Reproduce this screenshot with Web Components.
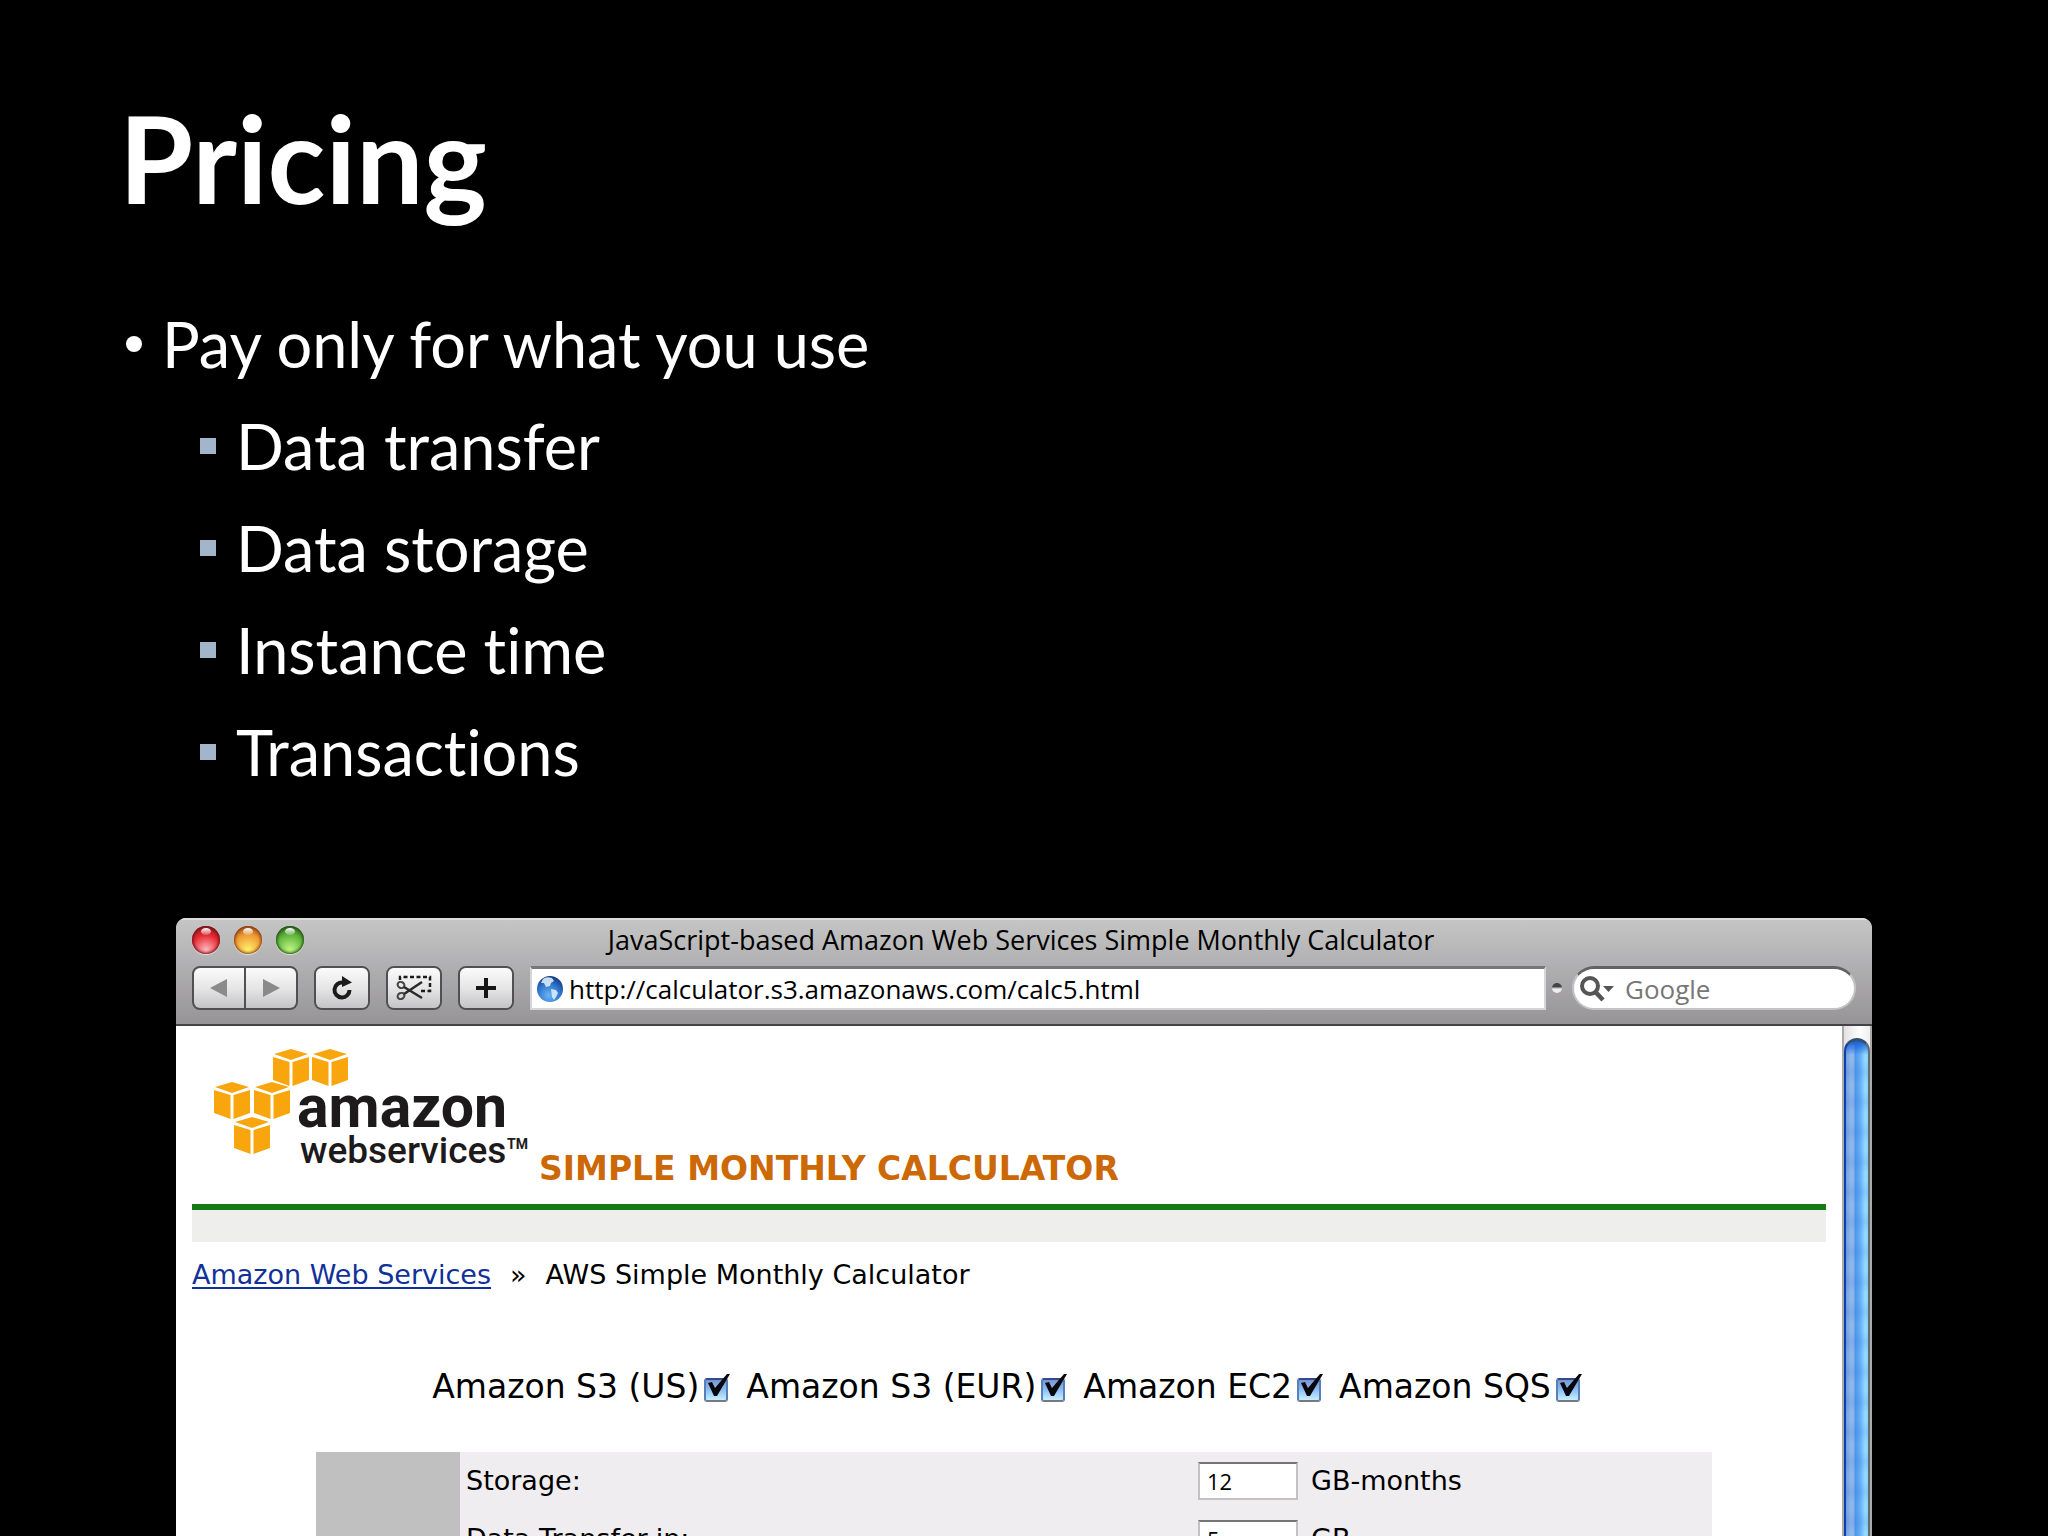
<!DOCTYPE html>
<html lang="en">
<head>
<meta charset="utf-8">
<title>Pricing</title>
<style>
body { margin: 0; background: #000; }
</style>
</head>
<body>
<pricing-slide>
  <slide-title slot="title">Pricing</slide-title>
  <slide-point>Pay only for what you use</slide-point>
  <slide-point level="2">Data transfer</slide-point>
  <slide-point level="2">Data storage</slide-point>
  <slide-point level="2">Instance time</slide-point>
  <slide-point level="2">Transactions</slide-point>
  <browser-window slot="figure" address="http://calculator.s3.amazonaws.com/calc5.html">
    <span slot="title">JavaScript-based Amazon Web Services Simple Monthly Calculator</span>
    <calculator-header>SIMPLE MONTHLY CALCULATOR</calculator-header>
    <page-crumbs>
      <span slot="home">Amazon Web Services</span>
      AWS Simple Monthly Calculator
    </page-crumbs>
    <service-list>
      <service-check>Amazon S3 (US)</service-check>
      <service-check>Amazon S3 (EUR)</service-check>
      <service-check>Amazon EC2</service-check>
      <service-check>Amazon SQS</service-check>
    </service-list>
    <usage-table></usage-table>
  </browser-window>
</pricing-slide>

<script>
const define = (name, html, setup) => {
  const template = document.createElement('template');
  template.innerHTML = html;
  customElements.define(name, class extends HTMLElement {
    constructor() {
      super();
      this.attachShadow({ mode: 'open' }).append(template.content.cloneNode(true));
    }
    connectedCallback() {
      if (setup) setup(this, this.shadowRoot);
    }
  });
};

define('pricing-slide', `
<style>
  :host { display: flex; flex-direction: column; box-sizing: border-box; height: 100vh; overflow: hidden;
    padding-top: 86px; background: #000; color: #fff; font-family: Lato, "Open Sans", sans-serif; font-variant-ligatures: none; }
  .points { padding: 63px 117px 115px; }
  .figure { display: flex; flex: 1; flex-direction: column; padding: 0 176px; }
</style>
<slot name="title"></slot>
<div class="points" role="list"><slot></slot></div>
<div class="figure"><slot name="figure"></slot></div>`);

define('slide-title', `
<style>
  :host { display: block; padding: 0 119px; }
  h1 { margin: 0; font-size: 120px; line-height: 144px; font-weight: bold; }
</style>
<h1><slot></slot></h1>`);

define('slide-point', `
<style>
  :host { display: flex; align-items: center; gap: 20px; padding-left: 9px; font-size: 63px; line-height: 102px; }
  :host::before { content: ""; width: 16px; height: 16px; border-radius: 50%; background: #fff; }
  :host([level="2"]) { padding-left: 83px; }
  :host([level="2"])::before { border-radius: 0; background: #a3b5cb; }
</style>
<slot></slot>`, host => host.setAttribute('role', 'listitem'));

define('browser-window', `
<style>
  :host { display: flex; flex: 1; flex-direction: column; overflow: hidden; border-radius: 10px 10px 0 0;
    background: #fff; color: #000; font-family: "Open Sans", "Noto Sans", sans-serif; }
  header { border-top: 2px solid #dcdcdc; border-bottom: 2px solid #444246; background: linear-gradient(#c5c5c6, #969496); }
  .bar { display: grid; grid-template-columns: 1fr auto 1fr; align-items: center; padding: 0 22px 0 16px;
    margin-top: -2px; font-size: 27px; line-height: 44px; }
  .tools { display: flex; align-items: center; gap: 16px; padding: 4px 16px 14px; }
  .address { display: flex; flex: 1; align-items: center; gap: 5px; box-sizing: border-box; height: 44px; padding-left: 4px;
    border: 2px solid #d6d6d8; border-top: 3px solid #78787a; background: #fff; }
  input { flex: 1; min-width: 0; margin: 0; padding: 0; border: 0; outline: 0; background: none;
    font: 26px/36px "Open Sans", "Noto Sans", sans-serif; color: #000; }
  input::placeholder { color: #777; opacity: 1; }
  .end { display: flex; align-items: center; gap: 10px; margin-left: -10px; }
  .grip { width: 10px; height: 10px; border-radius: 50%; background: linear-gradient(#444 35%, #eee 60%); }
  .search { display: flex; align-items: center; gap: 10px; box-sizing: border-box; width: 284px; height: 44px; padding: 0 20px 0 5px;
    border: 2px solid #c4c4c6; border-top: 3px solid #626264; border-radius: 22px; background: #fff; }
  svg { display: block; flex: none; }
  .view { display: flex; flex: 1; min-height: 0; }
  main { flex: 1; min-width: 0; padding: 0 16px; font-family: Verdana, "DejaVu Sans", sans-serif; }
</style>
<header>
  <div class="bar"><window-lights></window-lights><slot name="title"></slot></div>
  <div class="tools">
    <tool-group>
      <tool-button label="Back" wide><svg width="20" height="20"><path d="M1 10 18 1V19Z" fill="#8a8a8a"/></svg></tool-button>
      <tool-button label="Forward" wide><svg width="20" height="20"><path d="M19 10 2 1V19Z" fill="#8a8a8a"/></svg></tool-button>
    </tool-group>
    <tool-group><tool-button label="Reload"><svg width="26" height="28" viewBox="0 0 26 28"><path d="M14 8.500A7.500 7.500 0 1 0 20.500 16" fill="none" stroke="#1b1b1b" stroke-width="4"/><path d="M13 2 23 8.500 13 13Z" fill="#1b1b1b"/></svg></tool-button></tool-group>
    <tool-group><tool-button label="Web Clip"><svg width="38" height="30" viewBox="0 0 38 30"><path d="M5 7V4H35V18H24" fill="none" stroke="#1b1b1b" stroke-width="2.500" stroke-dasharray="4 2.500"/><g fill="none" stroke="#444" stroke-width="2"><ellipse cx="6" cy="12" rx="3.500" ry="3" transform="rotate(25 6 12)"/><ellipse cx="6" cy="23" rx="3.500" ry="3" transform="rotate(-25 6 23)"/><path d="M9 14 27 25M9 21 27 9" stroke="#2b2b2b" stroke-width="2.500"/></g></svg></tool-button></tool-group>
    <tool-group><tool-button label="Add Bookmark"><svg width="20" height="20"><path d="M10 0V20M0 10H20" stroke="#151515" stroke-width="4"/></svg></tool-button></tool-group>
    <div class="address">
      <svg width="28" height="28" viewBox="0 0 28 28"><defs><radialGradient id="g" cx=".45" cy=".75" r=".75"><stop offset="0" stop-color="#6cb4f4"/><stop offset=".6" stop-color="#2d74cc"/><stop offset="1" stop-color="#15387c"/></radialGradient></defs><circle cx="14" cy="14" r="13" fill="url(#g)"/><path d="M7 4Q10 1 16 3L18 6 15 8 14 11 10 12 8 8 5 8ZM15 14 20 15 22 18 20 22 18 25 16 22Z" fill="#d8ecfb" opacity=".9"/></svg>
      <input class="url" type="text" aria-label="Address">
    </div>
    <div class="end">
      <span class="grip"></span>
      <div class="search">
        <svg width="36" height="28" viewBox="0 0 36 28"><circle cx="11" cy="11" r="8" fill="none" stroke="#555" stroke-width="4"/><path d="M16.500 17 24 25" stroke="#555" stroke-width="4.500"/><path d="M24 11H35L29.500 17Z" fill="#555"/></svg>
        <input type="search" aria-label="Google search" placeholder="Google">
      </div>
    </div>
  </div>
</header>
<div class="view"><main><slot></slot></main><aqua-scrollbar></aqua-scrollbar></div>`,
(host, root) => { root.querySelector('.url').value = host.getAttribute('address'); });

define('window-lights', `
<style>
  :host { display: flex; gap: 14px; }
  button { position: relative; width: 28px; height: 28px; padding: 0; border: 0; border-radius: 50%;
    background: radial-gradient(circle at 50% 85%, var(--glow), var(--base) 55%, var(--rim) 100%);
    box-shadow: inset 0 0 3px 1px var(--rim), 0 1px 1px #e0e0e0; }
  button::before { content: ""; position: absolute; left: 9px; top: 2px; width: 10px; height: 7px; border-radius: 50%;
    background: linear-gradient(#fff, #fff3); }
  .close { --glow: #ffb8c0; --base: #e5282f; --rim: #701018; }
  .min { --glow: #fff26a; --base: #ee9a35; --rim: #84380e; }
  .zoom { --glow: #c3f584; --base: #5fb53c; --rim: #1d4d12; }
</style>
<button class="close" aria-label="Close"></button><button class="min" aria-label="Minimize"></button><button class="zoom" aria-label="Zoom"></button>`);

define('tool-group', `
<style>
  :host { display: flex; box-sizing: border-box; height: 44px; overflow: hidden; border: 2px solid #505052; border-radius: 8px;
    background: #505052; gap: 2px; }
</style>
<slot></slot>`);

define('tool-button', `
<style>
  :host { display: flex; width: 52px; }
  :host([wide]) { width: 50px; }
  button { display: flex; flex: 1; align-items: center; justify-content: center; padding: 0; border: 0;
    background: linear-gradient(#fbfbfb, #e6e6e7 50%, #c4c3c5); }
</style>
<button><slot></slot></button>`,
(host, root) => root.querySelector('button').setAttribute('aria-label', host.getAttribute('label')));

define('aqua-scrollbar', `
<style>
  :host { display: flex; box-sizing: border-box; width: 30px; padding-top: 12px; border-left: 2px solid #aaa; border-right: 2px solid #aaa;
    background: linear-gradient(90deg, #e4e0e2, #fff 60%, #f0eef0); }
  .thumb { flex: 1; box-sizing: border-box; border: solid; border-width: 3px 2px 0; border-color: #35516f #5d6d74 #5d6d74 #0c3fa8; border-radius: 13px 13px 0 0;
    background:
      linear-gradient(#1560d4, #2b7ae000 14px),
      repeating-linear-gradient(#2468d022 0 2px, #2468d000 12px 20px, #2468d022 30px),
      linear-gradient(90deg, #6f9fe4, #93b9e8 5px, #8ab4ea 8px, #4f95e9 9px, #64aef8 14px, #97d9ff 19px, #8ed2fd); }
</style>
<div class="thumb"></div>`);

define('aws-logo', `
<style>
  :host { display: block; }
  svg { display: block; }
</style>
<svg width="329" height="144" viewBox="210 1045 329 144" role="img">
  <defs>
    <g id="cube" fill="#f9a60e"><path d="M1 5 18 0 35 5 18 11Z"/><path d="M0 8 16.500 13V37L0 31Z"/><path d="M19.500 13 36 8V31L19.500 37Z"/></g>
  </defs>
  <use href="#cube" x="273" y="1049"/><use href="#cube" x="312" y="1049"/>
  <use href="#cube" x="214" y="1082"/><use href="#cube" x="254" y="1082"/>
  <use href="#cube" x="234" y="1117"/>
  <g fill="#1d1a1c" font-family="Roboto, sans-serif">
    <text x="297" y="1127" font-size="59" font-weight="bold">amazon</text>
    <text x="300" y="1163" font-size="37" font-weight="500">webservices</text>
    <text x="507" y="1149" font-size="14" font-weight="bold">TM</text>
  </g>
</svg>`);

define('calculator-header', `
<style>
  :host { display: flex; align-items: flex-end; padding: 19px 0 15px 18px; border-bottom: 6px solid #137a16; }
  h2 { margin: 0; color: #cc6805; font-size: 33px; line-height: 40px; font-weight: bold; }
</style>
<aws-logo></aws-logo><h2><slot></slot></h2>`);

define('page-crumbs', `
<style>
  :host { display: block; border-top: 32px solid #eeeeed; font-size: 27px; line-height: 32px; }
  nav { display: flex; gap: 19px; padding-top: 17px; }
  a { color: #10309a; text-decoration: underline 2px; text-underline-offset: 3px; }
</style>
<nav><a href="#"><slot name="home"></slot></a><span>»</span><span><slot></slot></span></nav>`);

define('service-list', `
<style>
  :host { display: flex; justify-content: center; gap: 18px; padding: 76px 6px 45px 0; font-size: 33px; line-height: 40px; }
</style>
<slot></slot>`);

define('service-check', `
<style>
  :host { display: block; }
  label { display: flex; align-items: center; gap: 5px; }
  .box { position: relative; display: flex; margin-top: 6px; }
  input { appearance: none; box-sizing: border-box; width: 24px; height: 24px; margin: 0; border: 2px solid #5580bc; border-color: #33488e #5580bc #77797c;
    border-radius: 3px; background: linear-gradient(#7795cf, #8fbff2 50%, #c6f0ff); }
  svg { position: absolute; left: 0; bottom: 4px; pointer-events: none; }
</style>
<label><slot></slot><span class="box"><input type="checkbox" checked><svg width="27" height="25" viewBox="0 0 27 25"><path d="M4 10 8 9 11 15 23 1 26 1 13 23 10 23Z" fill="#08080c"/></svg></span></label>`);

define('usage-table', `
<style>
  :host { display: block; padding: 0 114px 0 124px; }
  table { width: 100%; border-spacing: 0; table-layout: fixed; background: #efedef; font-size: 27px; line-height: 32px; }
  td, th { height: 58px; padding: 0; text-align: left; font-weight: normal; }
  .service { width: 144px; background: #c0c0c0; }
  .name { width: 732px; padding-left: 6px; }
  .amount { width: 100px; }
  .unit { padding-left: 13px; }
  input { display: block; box-sizing: border-box; width: 100px; height: 38px; margin: 0; padding: 0 7px; border: 2px solid #c2c2c4;
    border-top-color: #757577; border-radius: 0; outline: 0; background: #fff; font: 22px/32px "Open Sans", sans-serif; color: #000; }
</style>
<table>
  <tr><td class="service" rowspan="2"></td><th class="name" scope="row"><label for="storage">Storage:</label></th><td class="amount"><input id="storage" type="text" value="12"></td><td class="unit">GB-months</td></tr>
  <tr><th class="name" scope="row"><label for="inbound">Data Transfer-in:</label></th><td class="amount"><input id="inbound" type="text" value="5"></td><td class="unit">GB</td></tr>
</table>`);
</script>
</body>
</html>
